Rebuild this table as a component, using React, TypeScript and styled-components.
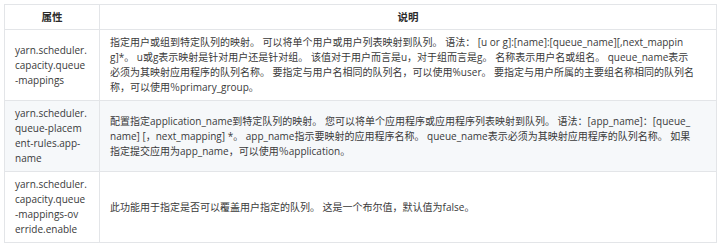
import { createGlobalStyle, styled } from "styled-components";

const GlobalStyle = createGlobalStyle`
	html, body {
		margin: 0;
		padding: 0;
		background: #fff;
	}
	body {
		font-family: "Open Sans", "Noto Sans CJK SC", sans-serif;
		color: #3a3a3a;
	}
`;

const Page = styled.div`
	padding: 4px 3px 0 4px;
`;

const Table = styled.table`
	width: 713px;
	border-collapse: collapse;
	table-layout: fixed;
	font-size: 10px;
	line-height: 15px;
`;

const HeadCell = styled.th<{ $w?: number }>`
	width: ${(p) => (p.$w ? `${p.$w}px` : "auto")};
	height: 24px;
	padding: 0;
	border: 1px solid #e3e5e8;
	font-weight: 700;
	font-size: 10.5px;
	color: #2b2b2b;
	text-align: center;
	vertical-align: middle;
`;

const Row = styled.tr<{ $striped?: boolean }>`
	background: ${(p) => (p.$striped ? "#f6f8fa" : "#fff")};
`;

const NameCell = styled.td`
	padding: 5px 0 5px 10px;
	border: 1px solid #e3e5e8;
	vertical-align: middle;
	white-space: nowrap;
	overflow: hidden;
`;

const DescCell = styled.td`
	padding: 5px 6px 5px 10px;
	border: 1px solid #e3e5e8;
	vertical-align: middle;
	white-space: nowrap;
	overflow: hidden;
`;

const Line = styled.div`
	height: 15px;
`;

const rows = [
	{
		name: ["yarn.scheduler.", "capacity.queue", "-mappings"],
		desc: [
			"指定用户或组到特定队列的映射。 可以将单个用户或用户列表映射到队列。 语法： [u or g]:[name]:[queue_name][,next_mappin",
			"g]*。 u或g表示映射是针对用户还是针对组。 该值对于用户而言是u，对于组而言是g。 名称表示用户名或组名。 queue_name表示",
			"必须为其映射应用程序的队列名称。 要指定与用户名相同的队列名，可以使用%user。 要指定与用户所属的主要组名称相同的队列名",
			"称，可以使用％primary_group。",
		],
	},
	{
		name: ["yarn.scheduler.", "queue-placem", "ent-rules.app-", "name"],
		desc: [
			"配置指定application_name到特定队列的映射。 您可以将单个应用程序或应用程序列表映射到队列。 语法：[app_name]：[queue_",
			"name] [，next_mapping] *。 app_name指示要映射的应用程序名称。 queue_name表示必须为其映射应用程序的队列名称。 如果",
			"指定提交应用为app_name，可以使用％application。",
		],
	},
	{
		name: ["yarn.scheduler.", "capacity.queue", "-mappings-ov", "erride.enable"],
		desc: ["此功能用于指定是否可以覆盖用户指定的队列。 这是一个布尔值，默认值为false。"],
	},
];

export default function App() {
	return (
		<>
			<GlobalStyle />
			<Page>
				<Table>
					<thead>
						<tr>
							<HeadCell $w={94}>属性</HeadCell>
							<HeadCell>说明</HeadCell>
						</tr>
					</thead>
					<tbody>
						{rows.map((r, i) => (
							<Row key={i} $striped={i % 2 === 1}>
								<NameCell>
									{r.name.map((l, j) => (
										<Line key={j}>{l}</Line>
									))}
								</NameCell>
								<DescCell>
									{r.desc.map((l, j) => (
										<Line key={j}>{l}</Line>
									))}
								</DescCell>
							</Row>
						))}
					</tbody>
				</Table>
			</Page>
		</>
	);
}
